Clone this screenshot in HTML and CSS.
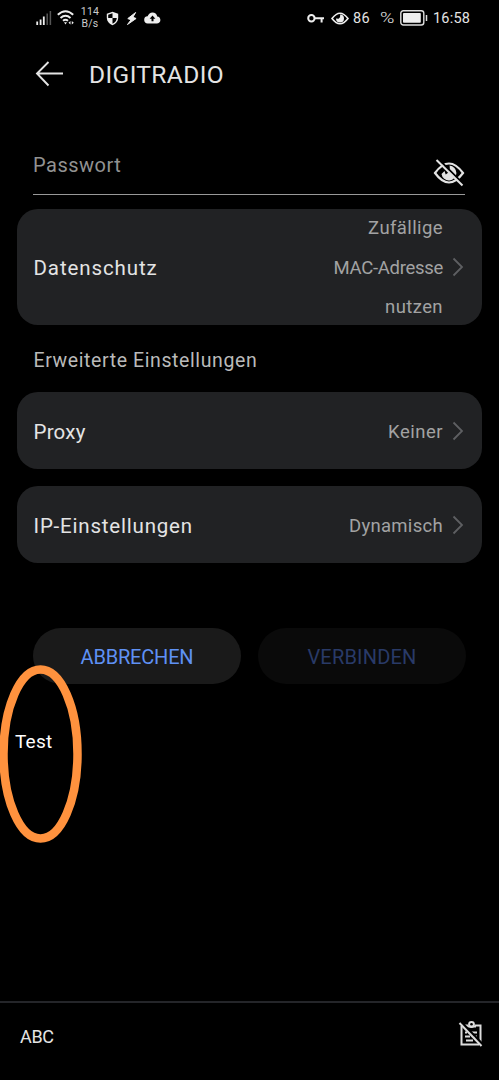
FILE: index.html
```html
<!DOCTYPE html>
<html lang="de">
<head>
<meta charset="utf-8">
<title>DIGITRADIO</title>
<link rel="stylesheet" href="styles.css">
</head>
<body>
<div class="screen">
  <div class="status">
    <div class="status-left">
      <svg class="signal" width="16" height="16" viewBox="0 0 16 16"><path d="M1.2 11.5V15M4.6 9.5V15M7.8 6.5V15" stroke="#eee" stroke-width="1.8"/><path d="M11.2 3.5V15M14.4 1V15" stroke="#555" stroke-width="1.5"/></svg>
      <svg class="wifi" width="18" height="16" viewBox="0 0 18 16" fill="none" stroke="#eee" stroke-width="2"><path d="M.8 4.8Q8.5-2.3 16.2 4.8M3.5 8Q8.5 3.6 13.5 8M6 10.8Q8.5 8.8 11 10.8"/><path d="M7 12.3h3l-1.5 2.3zM13.5 11l-2 1.7 2 1.7zM14.8 11l2 1.7-2 1.7z" fill="#eee" stroke="none"/></svg>
      <div class="rate"><span>114</span><span>B/s</span></div>
      <svg class="shield" width="13" height="15" viewBox="0 0 13 15"><path d="M6.5.8 12.2 2.7V7c0 3.4-2.3 5.8-5.7 7.2C3.1 12.8.8 10.4.8 7V2.7z" fill="#eee"/><path d="M6.5 2.3V7H2.2V3.7zM6.5 7h4.3c-.1 2.6-1.8 4.6-4.3 5.7z" fill="#000"/></svg>
      <svg class="bolt" width="10" height="13" viewBox="0 0 10 13"><path d="M8.6.5.8 6.6l3.3 1.2L.5 12.5l8.600-6L5.900 5.200z" fill="#eee" stroke="#eee" stroke-width="1"/></svg>
      <svg class="cloud" width="17" height="12" viewBox="0 0 17 12"><path d="M4 11.500a3.600 3.600 0 0 1-.4-7.200C4.600 1.800 6.300.5 8.500.5c2.400 0 4.300 1.500 4.700 3.900 1.900.2 3.200 1.600 3.200 3.500 0 2-1.600 3.600-3.600 3.600z" fill="#eee"/><path d="M8.500 3.500 5.600 6.700h1.900v2.500h2V6.700h1.900z" fill="#000"/></svg>
    </div>
    <div class="status-right">
      <svg class="key" width="18" height="9" viewBox="0 0 18 9" fill="none" stroke="#eee" stroke-width="2"><circle cx="4.4" cy="4.2" r="3.2"/><path d="M7.600 4.200H17M14.600 4.200V8.500"/></svg>
      <svg class="eye" width="18" height="13" viewBox="0 0 18 13"><path d="M1 6.500Q9-4 17 6.500 9 17 1 6.500z" fill="none" stroke="#eee" stroke-width="1.6"/><path d="M9 2.600a4 4 0 1 1-4 4l2.500.2C9 6.500 9.500 4 9 2.600z" fill="#eee"/></svg>
      <span class="battery-number">86</span><span class="percent">%</span>
      <svg class="battery" width="28" height="16" viewBox="0 0 28 16"><rect x=".8" y=".8" width="23" height="14.2" rx="2.5" fill="none" stroke="#ddd" stroke-width="1.4"/><rect x="3" y="3" width="17.800" height="9.800" rx=".8" fill="#eee"/><path d="M26.500 5v6" stroke="#ddd" stroke-width="1.5"/></svg>
      <span class="clock">16:58</span>
    </div>
  </div>

  <header class="header">
    <svg width="30" height="27" viewBox="0 0 30 27" fill="none" stroke="#e4e4e4" stroke-width="1.9"><path d="M13.500 1 2 12.500l11.500 12M2 12.500h26"/></svg>
    <h1 class="title">DIGITRADIO</h1>
  </header>

  <div class="password">
    <span class="placeholder">Passwort</span>
    <svg class="hide" width="32" height="30" viewBox="0 0 32 30"><path d="M2 15Q16-4 30 15 16 34 2 15z" fill="none" stroke="#e3e3e3" stroke-width="2.2"/><path d="M16.500 7.500a7.500 7.500 0 1 1-8 8.500l3-3 1.200 3.500c3.300-1.500 4.700-5 3.800-9z" fill="#e3e3e3"/><path d="m5.300 1 26 26" stroke="#000" stroke-width="2"/><path d="m3.500 2 26 25.500" stroke="#e3e3e3" stroke-width="2"/></svg>
  </div>

  <main class="settings">
    <section class="card privacy"><span class="label datenschutz">Datenschutz</span><span class="value mac">Zufällige<br><span class="tight">MAC-Adresse</span><br>nutzen</span><svg class="chevron" width="12" height="20" viewBox="0 0 12 20"><path d="m1.500 1.500 8.500 8.500-8.500 8.500"/></svg></section>
    <h2 class="subtitle">Erweiterte Einstellungen</h2>
    <section class="card"><span class="label proxy">Proxy</span><span class="value keiner">Keiner</span><svg class="chevron" width="12" height="20" viewBox="0 0 12 20"><path d="m1.500 1.500 8.500 8.500-8.500 8.500"/></svg></section>
    <section class="card ip-card"><span class="label ip">IP-Einstellungen</span><span class="value dynamic">Dynamisch</span><svg class="chevron" width="12" height="20" viewBox="0 0 12 20"><path d="m1.500 1.500 8.500 8.500-8.500 8.500"/></svg></section>
  </main>

  <div class="actions"><button class="button">ABBRECHEN</button><button class="button connect" disabled>VERBINDEN</button></div>
  <div class="note">Test</div>
  <svg class="annotation" width="84" height="182" viewBox="0 0 84 182"><ellipse cx="40.500" cy="91" rx="37" ry="84.500" fill="none" stroke="#ff923e" stroke-width="8.5"/></svg>

  <footer class="keyboard-bar">
    <span>ABC</span>
    <svg class="clipboard" width="26" height="27" viewBox="0 0 26 27" fill="none" stroke="#ddd" stroke-width="2"><path d="M3.500 5V23.500H21M10 4.500H7M17 4.500h5.500V21M9 5.500h9M13 11.500h6M7 11.500h2M7 15.500h5M8 19.500h7M16 15.500h3"/><circle cx="13.500" cy="3.500" r="2.400"/><path d="m3.500 1 22 23" stroke="#000"/><path d="m1.500 2 22 23"/></svg>
  </footer>
</div>
</body>
</html>
```
FILE: styles.css
```css
* { box-sizing: border-box; }
body { margin: 0; background: #000; font-family: Roboto, sans-serif; color: #e4e4e4; }
svg { display: block; flex: none; }
.screen { position: relative; width: 499px; height: 1080px; overflow: hidden; display: flex; flex-direction: column; }
.status { height: 36px; display: flex; justify-content: space-between; padding: 0 29px 0 36px; }
.status-left, .status-right { display: flex; align-items: center; }
.wifi { margin-left: 5px; }
.rate { margin-left: 5px; width: 20px; display: flex; flex-direction: column; align-items: center; font-size: 10.5px; line-height: 12px; letter-spacing: .2px; color: #ccc; }
.shield { margin-left: 6px; }
.bolt { margin-left: 8px; }
.cloud { margin-left: 7px; }
.eye { margin-left: 6px; }
.battery-number { margin-left: 4px; font-size: 14.5px; letter-spacing: .4px; }
.percent { margin-left: 10px; font-size: 15px; font-weight: 300; width: 17px; transform-origin: left; transform: scaleX(1.3); }
.battery { margin-left: 3px; }
.clock { margin-left: 5px; font-size: 14.5px; letter-spacing: .2px; width: 37px; }
.header { height: 77px; display: flex; align-items: center; padding-left: 35px; gap: 24px; }
.title { margin: 0; font-size: 24.5px; font-weight: 400; letter-spacing: .4px; line-height: 28px; padding-top: 1px; }
.password { margin: 30px 34px 0 33px; height: 52px; border-bottom: 1px solid #999; display: flex; justify-content: space-between; }
.placeholder { font-size: 20px; line-height: 24px; padding-top: 10px; letter-spacing: .5px; color: #929292; }
.hide { margin-top: 15px; }
.settings { margin: 14px 17px 0 16.5px; }
.card { height: 77px; border-radius: 21px; background: #212224; display: flex; align-items: center; padding: 0 18px 0 17px; }
.privacy { height: 116px; }
.ip-card { margin-top: 17px; }
.label { font-size: 20.5px; letter-spacing: .8px; flex: 1; padding-top: 3px; }
.datenschutz { padding-top: 2px; letter-spacing: .9px; }
.proxy { letter-spacing: .2px; }
.value { font-size: 18.5px; letter-spacing: .4px; color: #a2a2a3; text-align: right; line-height: 39.5px; padding-top: 4px; }
.mac { padding-top: 3px; }
.tight { letter-spacing: -.3px; }
.keiner { letter-spacing: .5px; }
.dynamic { letter-spacing: .3px; }
.chevron { margin-left: 9px; fill: none; stroke: #5e5f62; stroke-width: 1.8; }
.subtitle { margin: 0; padding-left: 17px; height: 67px; line-height: 71px; font-size: 19.5px; font-weight: 400; letter-spacing: .6px; color: #bababa; }
.actions { margin: 65px 33px 0; display: flex; gap: 17px; }
.button { flex: 1; height: 56px; border: 0; border-radius: 28px; padding: 2px 0 0; background: #1a1a1a; color: #5f91f4; font: 20px Roboto, sans-serif; letter-spacing: -.2px; }
.connect { background: #0a0a0a; color: #293a68; letter-spacing: .2px; }
.note { margin: 46px 0 0 15px; font-size: 19px; line-height: 24px; color: #fff; letter-spacing: .2px; }
.annotation { position: absolute; left: 0; top: 663px; }
.keyboard-bar { margin-top: auto; height: 79px; border-top: 2px solid #242529; display: flex; justify-content: space-between; padding: 17px 15px 0 20px; font-size: 18px; line-height: 34px; letter-spacing: -.3px; }
.clipboard { margin-top: 1px; }
```
